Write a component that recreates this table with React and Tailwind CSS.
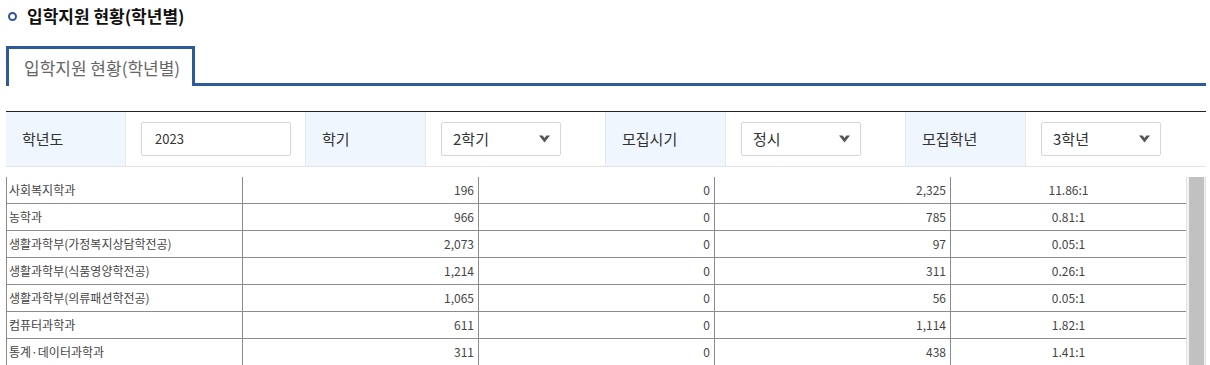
const rows = [
  ["사회복지학과", "196", "0", "2,325", "11.86:1"],
  ["농학과", "966", "0", "785", "0.81:1"],
  ["생활과학부(가정복지상담학전공)", "2,073", "0", "97", "0.05:1"],
  ["생활과학부(식품영양학전공)", "1,214", "0", "311", "0.26:1"],
  ["생활과학부(의류패션학전공)", "1,065", "0", "56", "0.05:1"],
  ["컴퓨터과학과", "611", "0", "1,114", "1.82:1"],
  ["통계·데이터과학과", "311", "0", "438", "1.41:1"],
];

function Label({ children }) {
  return (
    <div className="flex items-center bg-[#f0f6fd] border-r border-[#e4e8ee] pl-4 text-[15px] text-[#333]">
      {children}
    </div>
  );
}

function Arrow() {
  return (
    <svg width="11" height="8" viewBox="0 0 11 8" className="fill-[#555]">
      <polygon points="0,0.6 3.6,0.6 5.5,3 7.4,0.6 11,0.6 5.5,7.6" />
    </svg>
  );
}

function Select({ value }) {
  return (
    <div className="flex items-center border-r border-[#e4e8ee] pl-[15px] last:border-r-0">
      <div className="flex h-[34px] w-[120px] items-center justify-between rounded-[2px] border border-[#d6d6d6] bg-white pl-[11px] pr-[10px] text-[15px] text-[#333]">
        <span>{value}</span>
        <Arrow />
      </div>
    </div>
  );
}

export default function App() {
  return (
    <div
      className="h-[365px] w-[1210px] overflow-hidden bg-white"
      style={{ fontFamily: '"Noto Sans CJK KR", "Noto Sans", sans-serif' }}
    >
      <div className="flex h-[32px] items-center pl-[8px]">
        <span className="mr-[10px] h-[9px] w-[9px] rounded-full border-2 border-[#34519a]" />
        <h2 className="text-[17px] font-bold text-[#111]">입학지원 현황(학년별)</h2>
      </div>

      <div className="ml-[6px] mr-[4px] mt-[14px] flex items-end">
        <div className="flex h-[40px] w-[189px] items-center border-l-[3px] border-r-[3px] border-t-[3px] border-[#2c5a9b] pl-[15px] text-[17px] text-[#666]">
          입학지원 현황(학년별)
        </div>
        <div className="flex-1 border-b-[3px] border-[#2c5a9b]" />
      </div>

      <div className="ml-[6px] mr-[4px] mt-[25px] grid h-[56px] grid-cols-[120px_180px_120px_180px_120px_180px_120px_180px] border-b border-t border-b-[#e4e4e4] border-t-[#222]">
        <Label>학년도</Label>
        <div className="flex items-center border-r border-[#e4e8ee] pl-[15px]">
          <div className="flex h-[34px] w-[150px] items-center rounded-[2px] border border-[#d6d6d6] bg-white pl-[13px] text-[13px] text-[#333]">
            2023
          </div>
        </div>
        <Label>학기</Label>
        <Select value="2학기" />
        <Label>모집시기</Label>
        <Select value="정시" />
        <Label>모집학년</Label>
        <Select value="3학년" />
      </div>

      <div className="ml-[6px] mr-[4px] mt-[10px] flex">
        <div className="grid w-[1180px] grid-cols-[236px_236px_236px_236px_236px] border-l border-[#8c8c8c]">
          {rows.map((r) =>
            r.map((cell, i) => (
              <div
                key={r[0] + i}
                className={
                  "flex h-[27px] items-center border-b border-r border-[#8c8c8c] text-[12px] text-[#444] " +
                  (i === 0 ? "pl-[2px]" : i === 4 ? "justify-center" : "justify-end pr-[4px]")
                }
              >
                {cell}
              </div>
            ))
          )}
        </div>
        <div className="flex w-[20px] justify-center border-l border-r border-[#e2e2e2] bg-[#f4f4f4]">
          <div className="w-[15px] bg-[#c1c1c1]" />
        </div>
      </div>
    </div>
  );
}
